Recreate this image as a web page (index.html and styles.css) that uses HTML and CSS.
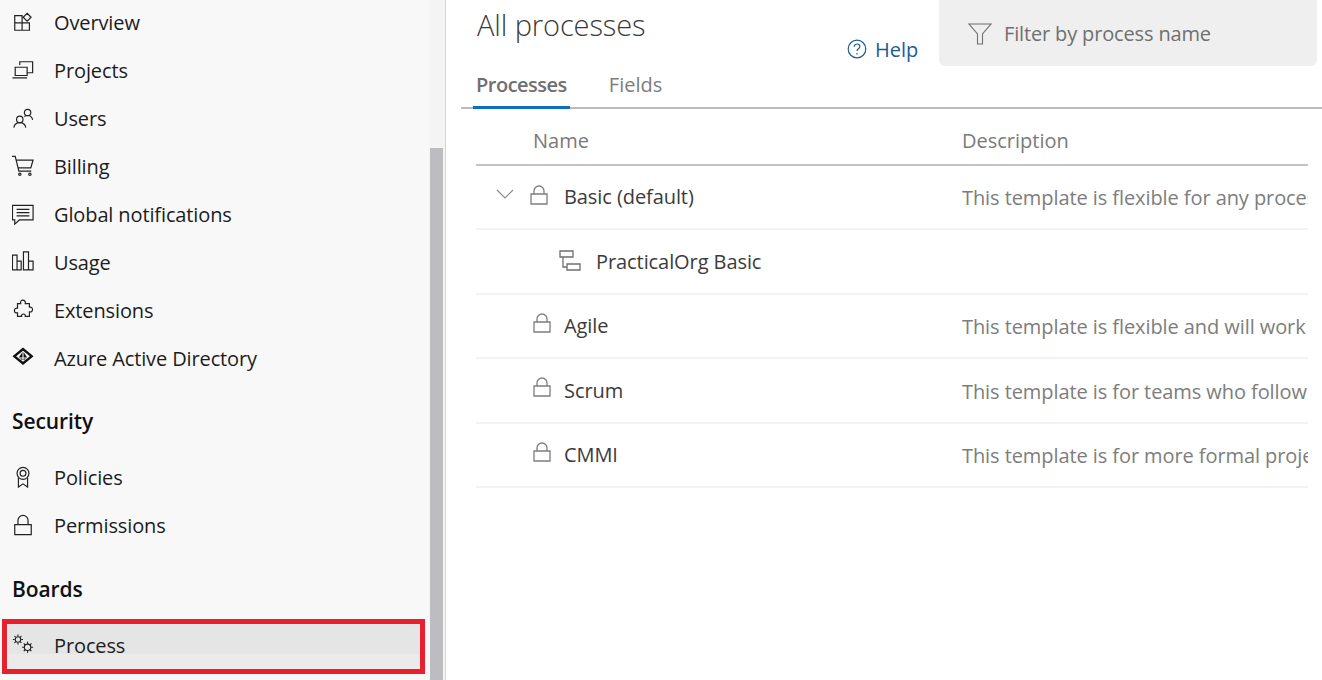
FILE: index.html
```html
<!DOCTYPE html>
<html lang="en">
<head>
<meta charset="utf-8">
<title>All processes</title>
<link rel="stylesheet" href="styles.css">
</head>
<body>
<div class="app">
  <aside class="sidebar">
    <nav class="nav">
      <a class="item"><svg class="ico" viewBox="0 0 24 24"><path d="M3 5h8v16H3zM3 13h16M11 13h8v8h-8M16.500 2.500l4.300 4.300-4.300 4.300-4.300-4.300z"/></svg><span>Overview</span></a>
      <a class="item"><svg class="ico" viewBox="0 0 24 24"><path d="M8.500 6.500V3h14v12h-6M3.500 9h13v9h-13zM.5 20.500h16"/></svg><span>Projects</span></a>
      <a class="item"><svg class="ico" viewBox="0 0 24 24"><circle cx="8.500" cy="13.500" r="3.500"/><circle cx="17" cy="6" r="3.500"/><path d="M2 22.500c.5-3.500 2.500-5.500 6.500-5.500s6 2 6.500 5.500M13.500 10.500c1-1 2.200-1.200 3.500-1.200 3.200 0 5 1.800 5.500 4.700"/></svg><span>Users</span></a>
      <a class="item"><svg class="ico" viewBox="0 0 24 24"><path d="M0 1.500h3.500l4 16h13.500M4.500 5.500H23l-2.500 8.500H6.500"/><circle cx="8.500" cy="21" r="1.300"/><circle cx="19.500" cy="21" r="1.300"/></svg><span>Billing</span></a>
      <a class="item"><svg class="ico" viewBox="0 0 24 24"><path d="M.5 2.500h22.500v16H8l-5 4.500v-4.500H.5zM5 7h14M5 10.500h14M5 14h14"/></svg><span>Global notifications</span></a>
      <a class="item"><svg class="ico" viewBox="0 0 24 24"><path d="M.5 4.500h5v16h-5zM5.500 11H10v9.500H5.500zM12.500 1H18v19.500h-5.500zM18 11h5v9.500h-5z"/></svg><span>Usage</span></a>
      <a class="item"><svg class="ico" viewBox="0 0 24 24"><path d="M6 5h3.500c-1.500-5 6-5 5 0H19v4c4.500-1.500 4.500 6.500 0 5v5h-4.500c1-3.500-5-3.500-4 0H6v-4c-4.500 1.500-4.500-6 0-5z"/></svg><span>Extensions</span></a>
      <a class="item"><svg class="ico ico-solid" viewBox="0 0 24 24"><path d="M12 .5 23.500 10 12 19.500 .5 10zM12 4 4.500 10 12 16 19.500 10zM11.400 5.500 7.500 11.500h3.900zM12.600 5.500v6h3.900zM11.400 12.500H8.500l2.900 2zM12.600 12.500v2l2.900-2z" fill-rule="evenodd"/></svg><span>Azure Active Directory</span></a>
    </nav>
    <h2 class="heading">Security</h2>
    <nav class="nav">
      <a class="item"><svg class="ico" viewBox="0 0 24 24"><circle cx="12" cy="8" r="6.500"/><circle cx="12" cy="8" r="3.200"/><path d="M7 13v10l5-3.500 5 3.500V13"/></svg><span>Policies</span></a>
      <a class="item"><svg class="ico" viewBox="0 0 24 24"><path d="M3 11.500h18v11H3zM6.500 11.500V7a5.500 5.500 0 0 1 11 0v4.500"/></svg><span>Permissions</span></a>
    </nav>
    <h2 class="heading">Boards</h2>
    <nav class="nav">
      <a class="item item-active"><svg class="ico ico-gear" viewBox="0 0 24 24"><circle cx="6.500" cy="6" r="3"/><circle cx="17" cy="14.500" r="3.500"/><path d="M6.500 .5v2M6.500 9.500v2M1 6h2M10 6h2M2.700 2.200l1.400 1.400M8.900 8.400l1.400 1.400M10.300 2.200 8.900 3.600M4.100 8.400l-1.400 1.400M17 8.500V11M17 18v2.500M11 14.500h2.500M20.500 14.500H23M12.800 10.300l1.800 1.800M19.400 16.900l1.800 1.800M21.200 10.300l-1.800 1.800M14.600 16.900l-1.800 1.800"/></svg><span>Process</span></a>
    </nav>
    <div class="callout"></div>
  </aside>
  <div class="scrollbar"><div class="thumb"></div></div>
  <main class="main">
    <header class="top">
      <h1 class="title">All processes</h1>
      <a class="help"><svg class="help-ico" viewBox="0 0 20 20"><circle cx="10" cy="10" r="8.800"/><path d="M7.300 7.800c0-1.700 1.200-2.800 2.800-2.800s2.700 1 2.700 2.500c0 2.300-2.800 2.300-2.800 4.600"/><path d="M10 14v1.500"/></svg><span>Help</span></a>
      <div class="filter"><svg class="filter-ico" viewBox="0 0 24 24"><path d="M1 2h22l-8.500 10v10h-5V12z"/></svg><span>Filter by process name</span></div>
    </header>
    <div class="tabs">
      <a class="tab tab-on">Processes</a>
      <a class="tab">Fields</a>
    </div>
    <div class="table">
      <div class="thead"><div class="c-name">Name</div><div class="c-desc">Description</div></div>
      <div class="row">
        <div class="c-name cell-main">
          <svg class="chev" viewBox="0 0 18 10"><path d="M1 1l8 8 8-8"/></svg>
          <svg class="lock lock-a" viewBox="0 0 18 20"><path d="M1 9h16v10H1zM4 9V6a5 5 0 0 1 10 0v3"/></svg>
          <span>Basic (default)</span>
        </div>
        <div class="c-desc desc">This template is flexible for any process and great for teams getting started</div>
      </div>
      <div class="row">
        <div class="c-name cell-sub">
          <svg class="inherit" viewBox="0 0 22 22"><path d="M1 1h13v6H1zM8 14h13v6H8zM4 7v10h4"/></svg>
          <span>PracticalOrg Basic</span>
        </div>
      </div>
      <div class="row">
        <div class="c-name cell-plain"><svg class="lock" viewBox="0 0 18 20"><path d="M1 9h16v10H1zM4 9V6a5 5 0 0 1 10 0v3"/></svg><span>Agile</span></div>
        <div class="c-desc desc">This template is flexible and will work great for most teams using Agile planning</div>
      </div>
      <div class="row">
        <div class="c-name cell-plain"><svg class="lock" viewBox="0 0 18 20"><path d="M1 9h16v10H1zM4 9V6a5 5 0 0 1 10 0v3"/></svg><span>Scrum</span></div>
        <div class="c-desc desc">This template is for teams who follow the Scrum framework</div>
      </div>
      <div class="row">
        <div class="c-name cell-plain"><svg class="lock" viewBox="0 0 18 20"><path d="M1 9h16v10H1zM4 9V6a5 5 0 0 1 10 0v3"/></svg><span>CMMI</span></div>
        <div class="c-desc desc">This template is for more formal projects requiring a framework</div>
      </div>
    </div>
  </main>
</div>
</body>
</html>
```

FILE: styles.css
```css
* { box-sizing: border-box; }
html, body { margin: 0; height: 100%; overflow: hidden; }
body { font-family: "Open Sans", "Noto Sans", sans-serif; background: #fff; color: #201f1e; }
.app { display: flex; height: 680px; width: 1322px; }
.sidebar { position: relative; width: 429px; flex: none; background: #f8f8f8; }
.sidebar > .nav:first-child { margin-top: -2px; }
.nav { display: flex; flex-direction: column; }
.item { display: flex; align-items: center; height: 48px; padding: 0 0 0 12px; gap: 20px; font-size: 20px; letter-spacing: -.12px; color: #1c1c1c; }
.ico { width: 22px; height: 22px; flex: none; fill: none; stroke: #222; stroke-width: 1.300; }
.ico-solid { fill: #111; stroke: none; }
.ico-gear { stroke-width: 1.200; }
.heading { margin: 0; height: 71px; padding: 24px 0 0 12px; font-size: 21px; line-height: 30px; font-weight: 600; letter-spacing: -.1px; color: #111; }
.nav + .heading + .nav + .heading { padding-top: 25px; }
.item-active { margin: 1px 8px 0 8px; padding-left: 4px; background: linear-gradient(#e5e5e5 33px, #ebebeb 33px); }
.callout { position: absolute; left: 2px; top: 619px; width: 423px; height: 55px; border: 5px solid #e81f2d; }
.scrollbar { width: 17px; flex: none; background: #f4f4f4; border-right: 1px solid #d4d4d4; padding: 148px 2px 0 1px; }
.thumb { height: 100%; background: #bdbdc1; }
.main { flex: 1; min-width: 0; overflow: hidden; }
.top { display: flex; align-items: flex-start; height: 66px; padding-left: 31px; }
.title { margin: 6px 0 0; width: 370px; font-size: 29px; line-height: 38px; font-weight: 300; letter-spacing: -.1px; color: #3a3a3a; }
.help { display: flex; align-items: center; gap: 8px; width: 92px; margin-top: 35px; height: 28px; font-size: 20px; color: #1f5a94; }
.help-ico { width: 20px; height: 20px; fill: none; stroke: #1f5a94; stroke-width: 1.200; }
.filter { display: flex; align-items: center; gap: 12px; width: 378px; height: 66px; padding: 1px 0 0 29px; background: #efefef; border-radius: 0 0 6px 6px; font-size: 20px; letter-spacing: -.15px; color: #6f6f6f; }
.filter-ico { width: 24px; height: 24px; fill: none; stroke: #6f6f6f; stroke-width: 1.100; }
.tabs { display: flex; gap: 42px; height: 43px; padding-left: 15px; margin-left: 15px; border-bottom: 2px solid #bcbcbc; }
.tab { position: relative; font-size: 20px; line-height: 38px; color: #7d7d7d; }
.tab-on { font-weight: 600; letter-spacing: -.5px; color: #6f6f6f; }
.tab-on::after { content: ""; position: absolute; left: -3px; right: -3px; bottom: -2px; height: 3px; background: #106ebe; }
.table { margin-left: 30px; width: 832px; }
.thead { display: flex; align-items: center; height: 56.600px; padding-top: 8px; border-bottom: 2px solid #c4c4c4; font-size: 20px; color: #7a7a7a; }
.thead .c-name { padding-left: 57px; }
.c-name { width: 486px; flex: none; display: flex; align-items: center; }
.c-desc { flex: 1; min-width: 0; white-space: nowrap; overflow: hidden; }
.row { display: flex; align-items: center; height: 64.500px; border-bottom: 2px solid #f3f3f3; font-size: 20px; letter-spacing: -.08px; color: #3b3b3b; }
.desc { color: #7d7d7d; padding-top: 2px; }
.cell-main { padding-left: 20px; }
.cell-sub { padding-left: 83px; }
.cell-plain { padding-left: 57px; }
.chev { width: 18px; height: 10px; fill: none; stroke: #8a8a8a; stroke-width: 1.100; margin-right: 16px; margin-top: -6px; }
.lock { width: 18px; height: 20px; fill: none; stroke: #7d7d7d; stroke-width: 1.300; margin-right: 13px; margin-top: -6px; }
.lock-a { margin-right: 16px; margin-top: -4px; }
.inherit { width: 22px; height: 22px; fill: none; stroke: #6f6f6f; stroke-width: 1.300; margin-right: 15px; }
```
